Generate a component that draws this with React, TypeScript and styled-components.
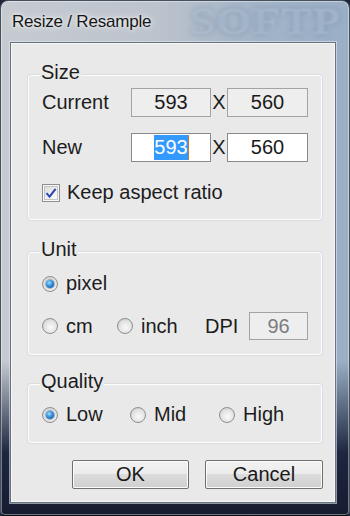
import React from "react";
import styled, { createGlobalStyle } from "styled-components";

const GlobalStyle = createGlobalStyle`
  html, body {
    margin: 0;
    padding: 0;
    background: #1c2438;
  }
  body {
    font-family: "Liberation Sans", Arial, sans-serif;
    color: #1c1c1c;
  }
  * {
    box-sizing: border-box;
  }
`;

const Window = styled.div`
  position: relative;
  width: 350px;
  height: 516px;
  display: flex;
  flex-direction: column;
  padding: 0 13px 12px 9px;
  border: 1px solid #46505d;
  border-bottom-color: #07090e;
  border-radius: 8px 8px 5px 5px;
  overflow: hidden;
  background:
    linear-gradient(180deg, rgba(29, 37, 62, 0) 0%, rgba(29, 37, 62, 0) 70%, #1d2540 88%, #161c30 100%),
    linear-gradient(90deg, #c6cbd1 0%, #bcc3cc 45%, #a6b6c8 68%, #9aafc6 100%);
  box-shadow: inset 0 0 0 1px rgba(255, 255, 255, 0.4);
`;

const TitleBar = styled.div`
  position: relative;
  height: 41px;
  display: flex;
  align-items: center;
  padding: 1px 0 0 2px;
`;

const Title = styled.span`
  position: relative;
  font-size: 17px;
  letter-spacing: -0.2px;
  color: #151515;
  text-shadow: 0 0 7px rgba(255, 255, 255, 0.95), 0 0 3px rgba(255, 255, 255, 0.8);
`;

// blurred watermark seen through the glass frame
const TitleMark = styled.span`
  position: absolute;
  left: 180px;
  top: 0;
  font-family: "Liberation Serif", serif;
  font-weight: bold;
  font-size: 37px;
  line-height: 41px;
  letter-spacing: 1px;
  color: rgba(200, 215, 232, 0.45);
  text-shadow: 0 0 5px rgba(80, 105, 140, 0.5);
  filter: blur(1.2px);
  transform: scaleX(1.22);
  transform-origin: left center;
  white-space: nowrap;
  pointer-events: none;
`;

const Client = styled.div`
  position: relative;
  flex: 1;
  display: flex;
  flex-direction: column;
  padding: 32px 13px 0 17px;
  background: #e9e9e9;
  border: 1px solid #66717e;
  box-shadow: 0 0 0 1px rgba(225, 232, 240, 0.6), inset 0 0 0 1px #f7f7f7;
`;

const Group = styled.div<{ $top: number; $bottom: number }>`
  display: flex;
  flex-direction: column;
  margin-top: ${(p) => p.$top}px;
  padding: 0 13px ${(p) => p.$bottom}px;
  border: 1px solid #fdfdfe;
  border-radius: 3px;
  box-shadow: 0 0 0 1px rgba(196, 206, 216, 0.45);
`;

const Caption = styled.span`
  align-self: flex-start;
  margin: -15px 0 0 -2px;
  padding: 0 1px;
  background: #e9e9e9;
  font-size: 20px;
  line-height: 23px;
`;

const SizeRow = styled.div<{ $top: number }>`
  display: grid;
  grid-template-columns: 89px 80px 16px 81px;
  align-items: center;
  height: 29px;
  margin-top: ${(p) => p.$top}px;
  font-size: 20px;
`;

const Times = styled.span`
  text-align: center;
  font-size: 20px;
`;

const Field = styled.div<{ $disabled?: boolean; $muted?: boolean }>`
  height: ${(p) => (p.$muted ? 28 : 29)}px;
  display: flex;
  align-items: center;
  justify-content: center;
  border: 1px solid ${(p) => (p.$disabled ? "#a3a3a3" : "#8a8a8a")};
  background: ${(p) => (p.$disabled ? "#eeeeee" : "#ffffff")};
  color: ${(p) => (p.$muted ? "#7c7c7c" : "#1a1a1a")};
  font-size: 20px;
  line-height: 23px;
`;

const Selected = styled.span`
  background: #3399ff;
  color: #ffffff;
  line-height: 25px;
  box-shadow: 1px 0 0 #c9782e;
`;

const Line = styled.div<{ $top: number }>`
  display: flex;
  align-items: center;
  height: 23px;
  margin-top: ${(p) => p.$top}px;
  font-size: 20px;
  line-height: 23px;
`;

const CheckBox = styled.span`
  width: 18px;
  height: 18px;
  margin-right: 7px;
  display: flex;
  align-items: center;
  justify-content: center;
  border: 1px solid #8f8f8f;
  background: linear-gradient(135deg, #d6d6d6 0%, #f2f2f2 60%, #ffffff 100%);
  box-shadow: inset 0 0 0 1px #f8f8f8, inset 0 0 0 2px #c4c4c4;
`;

const RadioCircle = styled.span`
  width: 16px;
  height: 16px;
  flex: none;
  margin-right: 8px;
  display: flex;
  align-items: center;
  justify-content: center;
  border: 1px solid #8d8f91;
  border-radius: 50%;
  background: radial-gradient(circle at 55% 60%, #fafafa 0%, #e2e2e2 55%, #cfcfcf 80%, #eeeeee 100%);
`;

const RadioDot = styled.span`
  width: 8px;
  height: 8px;
  border-radius: 50%;
  background: radial-gradient(circle at 40% 35%, #a6dcff 0%, #3b98e0 40%, #0f5a9e 85%, #0b3f70 100%);
  box-shadow: 0 0 0 1px rgba(20, 70, 120, 0.35);
`;

const Choice = styled.label`
  display: flex;
  align-items: center;
  font-size: 20px;
  line-height: 23px;
`;

const UnitRow = styled.div`
  display: grid;
  grid-template-columns: 75px 88px 44px 59px;
  align-items: center;
  height: 28px;
  margin-top: 17px;
  font-size: 20px;
`;

const QualityRow = styled.div`
  display: grid;
  grid-template-columns: 88px 89px auto;
  align-items: center;
  height: 23px;
  margin-top: 10px;
`;

const Buttons = styled.div`
  display: flex;
  justify-content: flex-end;
  gap: 16px;
  margin: 17px -1px 0 0;
`;

const Button = styled.button<{ $w: number }>`
  width: ${(p) => p.$w}px;
  height: 29px;
  padding: 0;
  border: 1px solid #707070;
  border-radius: 2px;
  background: linear-gradient(180deg, #f2f2f2 0%, #ebebeb 50%, #dcdcdc 50%, #cfcfcf 100%);
  box-shadow: inset 0 0 0 1px #fbfbfb;
  font-family: "Liberation Sans", Arial, sans-serif;
  font-size: 20px;
  color: #1a1a1a;
`;

const Radio = ({ checked, label }: { checked?: boolean; label: string }) => (
  <Choice>
    <RadioCircle>{checked ? <RadioDot /> : null}</RadioCircle>
    {label}
  </Choice>
);

export default function App() {
  return (
    <>
      <GlobalStyle />
      <Window>
        <TitleBar>
          <TitleMark>SOFTP</TitleMark>
          <Title>Resize / Resample</Title>
        </TitleBar>
        <Client>
          <Group $top={0} $bottom={15}>
            <Caption>Size</Caption>
            <SizeRow $top={4}>
              <span>Current</span>
              <Field $disabled>593</Field>
              <Times>X</Times>
              <Field $disabled>560</Field>
            </SizeRow>
            <SizeRow $top={16}>
              <span>New</span>
              <Field>
                <Selected>593</Selected>
              </Field>
              <Times>X</Times>
              <Field>560</Field>
            </SizeRow>
            <Line $top={19}>
              <CheckBox>
                <svg width="12" height="12" viewBox="0 0 12 12">
                  <path d="M1.5 6.2 L4.6 9.6 L10.6 1.8" fill="none" stroke="#2a46b8" strokeWidth="2" />
                </svg>
              </CheckBox>
              Keep aspect ratio
            </Line>
          </Group>

          <Group $top={32} $bottom={14}>
            <Caption>Unit</Caption>
            <Line $top={11}>
              <Radio checked label="pixel" />
            </Line>
            <UnitRow>
              <Radio label="cm" />
              <Radio label="inch" />
              <span>DPI</span>
              <Field $disabled $muted>96</Field>
            </UnitRow>
          </Group>

          <Group $top={29} $bottom={16}>
            <Caption>Quality</Caption>
            <QualityRow>
              <Radio checked label="Low" />
              <Radio label="Mid" />
              <Radio label="High" />
            </QualityRow>
          </Group>

          <Buttons>
            <Button $w={117}>OK</Button>
            <Button $w={118}>Cancel</Button>
          </Buttons>
        </Client>
      </Window>
    </>
  );
}
